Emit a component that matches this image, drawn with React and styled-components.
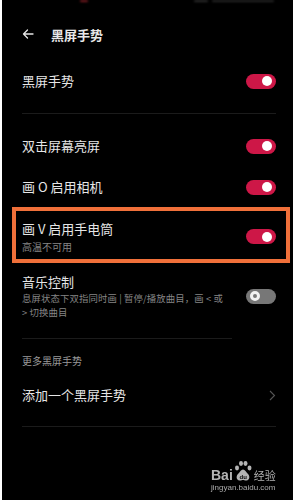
import React from 'react';
import styled, { createGlobalStyle } from 'styled-components';

const Global = createGlobalStyle`
  html, body { margin: 0; padding: 0; background: #fff; }
  body { font-family: "Noto Sans CJK SC", "Noto Sans", sans-serif; }
`;

const Screen = styled.div`
  position: relative;
  width: 291px;
  height: 500px;
  margin-left: 2px;
  background: #000;
  color: #e4e4e4;
  overflow: hidden;
  display: flex;
  flex-direction: column;
`;

const StatusBar = styled.div`
  height: 14px;
  display: flex;
  align-items: flex-start;
  padding-left: 78px;
`;

const Speck = styled.span`
  display: block;
  width: ${p => p.w}px;
  height: 2px;
  margin-left: ${p => p.ml}px;
  background: ${p => p.c};
  filter: blur(0.8px);
  border-radius: 1px;
`;

const Header = styled.div`
  height: 40px;
  display: flex;
  align-items: center;
  padding-left: 20px;
  gap: 17px;
`;

const Title = styled.div`
  font-size: 13px;
  font-weight: 700;
  color: #e8e8e8;
`;

const Row = styled.div`
  height: ${p => p.h}px;
  display: flex;
  align-items: center;
  justify-content: space-between;
  padding: 0 17px 0 20px;
  flex-shrink: 0;
`;

const Label = styled.div`
  font-size: 13px;
  line-height: 18px;
  color: #e6e6e6;
  white-space: nowrap;
`;

const Sub = styled.div`
  font-size: ${p => p.fs || 10}px;
  line-height: ${p => p.lh || 13}px;
  letter-spacing: ${p => p.ls || 0}px;
  color: #858585;
  white-space: nowrap;
  margin-top: ${p => p.mt || 0}px;
`;

const Divider = styled.div`
  height: 1px;
  background: #1b1b1b;
  flex-shrink: 0;
  margin: ${p => p.mt}px ${p => p.mr}px 0 20px;
`;

const Spacer = styled.div`
  height: ${p => p.h}px;
  flex-shrink: 0;
`;

const Highlight = styled.div`
  box-sizing: border-box;
  height: 56px;
  margin: 0 3px 0 10px;
  border: 4px solid #f0703a;
  display: flex;
  align-items: center;
  justify-content: space-between;
  padding: 3px 10px 0 6px;
  flex-shrink: 0;
`;

const TextCol = styled.div`
  display: flex;
  flex-direction: column;
`;

const Track = styled.div`
  position: relative;
  width: 30px;
  height: 15px;
  border-radius: 8px;
  background: ${p => (p.on ? '#cd1747' : '#777')};
  flex-shrink: 0;
`;

const Knob = styled.div`
  position: absolute;
  top: 2.5px;
  ${p => (p.on ? 'right: 4px;' : 'left: 4px;')}
  width: 10px;
  height: 10px;
  border-radius: 50%;
  box-sizing: border-box;
  background: ${p => (p.on ? '#fff' : '#777')};
  border: ${p => (p.on ? 'none' : '3px solid #f2f2f2')};
`;

const MusicRow = styled.div`
  display: flex;
  align-items: center;
  justify-content: space-between;
  padding: 10px 17px 0 20px;
  flex-shrink: 0;
`;

const SectionHead = styled.div`
  font-size: 10px;
  line-height: 14px;
  color: #999;
  padding-left: 20px;
  margin-top: 15px;
  flex-shrink: 0;
`;

const Watermark = styled.div`
  position: absolute;
  left: 209px;
  top: 458px;
  display: flex;
  flex-direction: column;
  align-items: flex-start;
  opacity: 0.85;
`;

const Brand = styled.div`
  display: flex;
  align-items: flex-end;
  height: 24px;
`;

const Bai = styled.span`
  font-family: "Liberation Sans", Arial, sans-serif;
  font-weight: 700;
  font-size: 14px;
  line-height: 14px;
  color: #d4d4d4;
`;

const Jy = styled.span`
  font-size: 11px;
  line-height: 14px;
  color: #d4d4d4;
  margin-left: 1px;
`;

const Url = styled.div`
  font-family: "Liberation Sans", Arial, sans-serif;
  font-size: 8px;
  line-height: 10px;
  color: #c8c8c8;
  margin-top: 1px;
`;

const Toggle = ({ on }) => (
  <Track on={on ? 1 : 0}>
    <Knob on={on ? 1 : 0} />
  </Track>
);

const BackArrow = () => (
  <svg width="12" height="12" viewBox="0 0 12 12">
    <path d="M11 6H1.5M5.5 2L1.5 6l4 4" fill="none" stroke="#e6e6e6" strokeWidth="1.3" strokeLinecap="round" strokeLinejoin="round" />
  </svg>
);

const Chevron = () => (
  <svg width="7" height="11" viewBox="0 0 7 11">
    <path d="M1 1l4.5 4.5L1 10" fill="none" stroke="#555" strokeWidth="1.1" />
  </svg>
);

const Paw = () => (
  <svg width="20" height="22" viewBox="0 0 20 22">
    <ellipse cx="4" cy="8" rx="2" ry="2.4" fill="#d4d4d4" />
    <ellipse cx="8" cy="3.5" rx="2" ry="2.4" fill="#d4d4d4" />
    <ellipse cx="12.5" cy="3.5" rx="2" ry="2.4" fill="#d4d4d4" />
    <ellipse cx="16.5" cy="8" rx="2" ry="2.4" fill="#d4d4d4" />
    <path d="M10 9.5c-2 0-3 2.5-5 4.5-2 2-2 6 1.5 6.5 1.5.2 2.5-.5 3.5-.5s2 .7 3.5.5c3.5-.5 3.5-4.5 1.5-6.5-2-2-3-4.5-5-4.5z" fill="#d4d4d4" />
    <text x="10.2" y="18.5" textAnchor="middle" fontFamily="Liberation Sans, Arial, sans-serif" fontWeight="700" fontSize="6" fill="#000">du</text>
  </svg>
);

export default function App() {
  return (
    <>
      <Global />
      <Screen>
        <StatusBar>
          <Speck w={8} ml={0} c="#7a1a20" />
          <Speck w={14} ml={106} c="#2c2c2c" />
          <Speck w={62} ml={4} c="#262626" />
        </StatusBar>
        <Header>
          <BackArrow />
          <Title>黑屏手势</Title>
        </Header>
        <Row h={54}>
          <Label>黑屏手势</Label>
          <Toggle on />
        </Row>
        <Divider mt={5} mr={17} />
        <Spacer h={11} />
        <Row h={42}>
          <Label>双击屏幕亮屏</Label>
          <Toggle on />
        </Row>
        <Row h={40}>
          <Label>画 O 启用相机</Label>
          <Toggle on />
        </Row>
        <Highlight>
          <TextCol>
            <Label>画 V 启用手电筒</Label>
            <Sub mt={2}>高温不可用</Sub>
          </TextCol>
          <Toggle on />
        </Highlight>
        <MusicRow>
          <TextCol>
            <Label>音乐控制</Label>
            <Sub mt={1} fs={9.4} lh={13.5} ls={0.12}>息屏状态下双指同时画 | 暂停/播放曲目，画 &lt; 或</Sub>
            <Sub fs={9.4} lh={13.5} ls={0.12}>&gt; 切换曲目</Sub>
          </TextCol>
          <Toggle />
        </MusicRow>
        <Divider mt={19} mr={61} />
        <SectionHead>更多黑屏手势</SectionHead>
        <Spacer h={7} />
        <Row h={40}>
          <Label>添加一个黑屏手势</Label>
          <Chevron />
        </Row>
        <Divider mt={11} mr={17} />
        <Watermark>
          <Brand>
            <Bai>Bai</Bai>
            <Paw />
            <Jy>经验</Jy>
          </Brand>
          <Url>jingyan.baidu.com</Url>
        </Watermark>
      </Screen>
    </>
  );
}
